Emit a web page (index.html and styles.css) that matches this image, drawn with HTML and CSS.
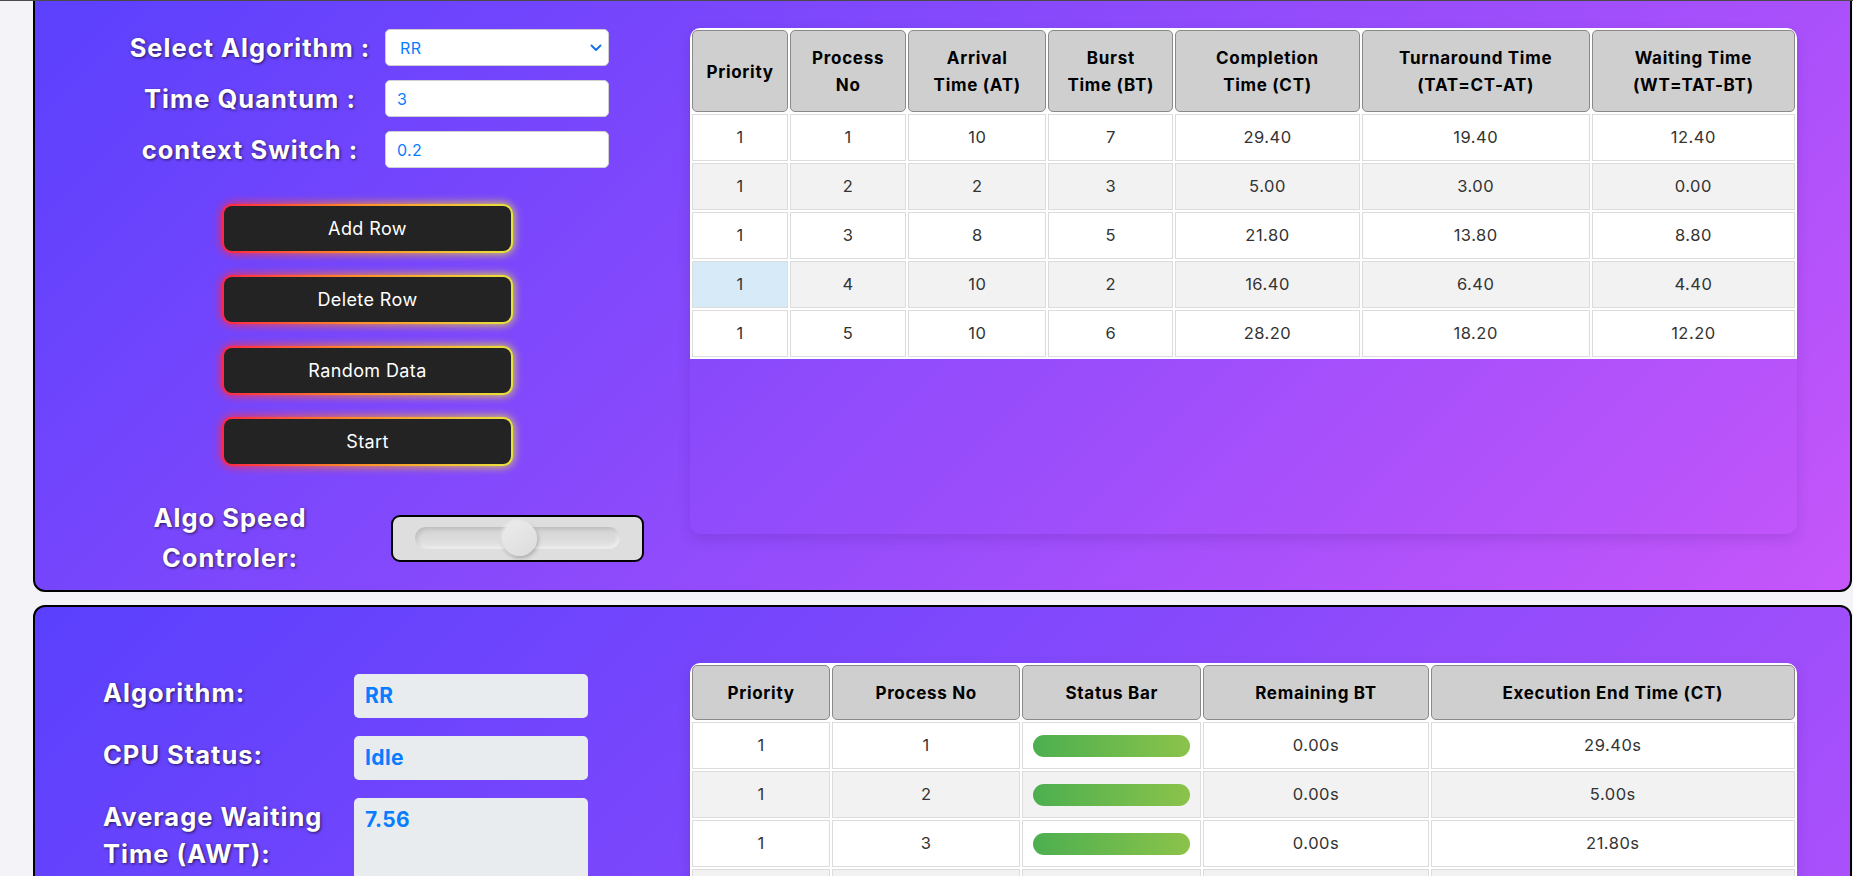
FILE: index.html
```html
<!DOCTYPE html>
<html lang="en">
<head>
<meta charset="utf-8">
<title>CPU Scheduling Visualizer</title>
<link rel="stylesheet" href="styles.css">
</head>
<body>
<div class="page">
  <section class="panel panel-top">
    <div class="controls">
      <div class="form-grid">
        <label class="field-label">Select Algorithm :</label>
        <div class="select-wrap">
          <select class="field-input field-select"><option>RR</option></select>
          <svg class="chevron" width="12" height="8" viewBox="0 0 12 8"><polyline points="1.5,1.5 6,6 10.5,1.5" fill="none" stroke="#1a73e8" stroke-width="2" stroke-linecap="round" stroke-linejoin="round"/></svg>
        </div>
        <label class="field-label">Time Quantum :</label>
        <input class="field-input" type="text" value="3">
        <label class="field-label">context Switch :</label>
        <input class="field-input" type="text" value="0.2">
      </div>
      <div class="buttons">
        <button class="glow-btn">Add Row</button>
        <button class="glow-btn">Delete Row</button>
        <button class="glow-btn">Random Data</button>
        <button class="glow-btn">Start</button>
      </div>
      <div class="speed-row">
        <div class="speed-label">Algo Speed<br>Controler:</div>
        <div class="slider-box"><input class="slider" type="range" min="0" max="100" value="51"></div>
      </div>
    </div>
    <div class="table-card table-card-top">
      <table class="data-table table-main">
        <thead>
          <tr>
            <th>Priority</th>
            <th>Process<br>No</th>
            <th>Arrival<br>Time (AT)</th>
            <th>Burst<br>Time (BT)</th>
            <th>Completion<br>Time (CT)</th>
            <th>Turnaround Time<br>(TAT=CT-AT)</th>
            <th>Waiting Time<br>(WT=TAT-BT)</th>
          </tr>
        </thead>
        <tbody>
          <tr><td>1</td><td>1</td><td>10</td><td>7</td><td>29.40</td><td>19.40</td><td>12.40</td></tr>
          <tr><td>1</td><td>2</td><td>2</td><td>3</td><td>5.00</td><td>3.00</td><td>0.00</td></tr>
          <tr><td>1</td><td>3</td><td>8</td><td>5</td><td>21.80</td><td>13.80</td><td>8.80</td></tr>
          <tr><td class="cell-hover">1</td><td>4</td><td>10</td><td>2</td><td>16.40</td><td>6.40</td><td>4.40</td></tr>
          <tr><td>1</td><td>5</td><td>10</td><td>6</td><td>28.20</td><td>18.20</td><td>12.20</td></tr>
        </tbody>
      </table>
    </div>
  </section>

  <section class="panel panel-bottom">
    <div class="info">
      <div class="info-grid">
        <div class="info-label">Algorithm:</div>
        <div class="info-box">RR</div>
        <div class="info-label">CPU Status:</div>
        <div class="info-box">Idle</div>
        <div class="info-label">Average Waiting Time (AWT):</div>
        <div class="info-box info-box-tall">7.56</div>
      </div>
    </div>
    <div class="table-card">
      <table class="data-table table-status">
        <thead>
          <tr>
            <th>Priority</th>
            <th>Process No</th>
            <th>Status Bar</th>
            <th>Remaining BT</th>
            <th>Execution End Time (CT)</th>
          </tr>
        </thead>
        <tbody>
          <tr><td>1</td><td>1</td><td><div class="status-bar"></div></td><td>0.00s</td><td>29.40s</td></tr>
          <tr><td>1</td><td>2</td><td><div class="status-bar"></div></td><td>0.00s</td><td>5.00s</td></tr>
          <tr><td>1</td><td>3</td><td><div class="status-bar"></div></td><td>0.00s</td><td>21.80s</td></tr>
          <tr><td>1</td><td>4</td><td><div class="status-bar"></div></td><td>0.00s</td><td>16.40s</td></tr>
          <tr><td>1</td><td>5</td><td><div class="status-bar"></div></td><td>0.00s</td><td>28.20s</td></tr>
        </tbody>
      </table>
    </div>
  </section>
</div>
</body>
</html>
```

FILE: styles.css
```css
* {
  box-sizing: border-box;
}

html {
  overflow: hidden;
  background: #f4f4f8;
}

body {
  margin: 0;
  font-family: Inter, "Liberation Sans", sans-serif;
  background: #f4f4f8;
  color: #333;
}

body::before {
  content: "";
  position: fixed;
  top: 0;
  left: 0;
  right: 0;
  height: 1px;
  background: #4a4a4a;
  z-index: 5;
}

.page {
  margin-top: -20px;
  padding: 0 1px 0 33px;
}

.panel {
  display: flex;
  align-items: flex-start;
  border: 2px solid #000;
  border-radius: 12px;
  background: linear-gradient(135deg, #5a40fd 0%, #c556fa 100%);
}

.panel-top {
  padding: 46px 53px 12px 0;
}

.panel-bottom {
  margin-top: 13px;
  padding: 56px 53px 0 0;
  height: 1000px;
}

/* ---------- controls ---------- */
.controls {
  flex: 0 0 655px;
  display: flex;
  flex-direction: column;
}

.form-grid {
  margin: 1px 0 0 90px;
  display: grid;
  grid-template-columns: 250px 224px;
  grid-auto-rows: 37px;
  column-gap: 10px;
  row-gap: 14px;
  align-items: center;
}

.field-label {
  text-align: center;
  color: #fff;
  font-size: 25.5px;
  font-weight: 700;
  letter-spacing: 1px;
  white-space: nowrap;
  text-shadow: 1px 1px 3px rgba(0, 0, 0, 0.65);
}

.field-input {
  width: 224px;
  height: 37px;
  border: 1px solid #cfcfcf;
  border-radius: 5px;
  background: #fff;
  padding: 0 11px;
  font-family: inherit;
  font-size: 16px;
  letter-spacing: 0.4px;
  color: #0a7cff;
  outline: none;
}

.select-wrap {
  position: relative;
  width: 224px;
  height: 37px;
}

.field-select {
  -webkit-appearance: none;
  appearance: none;
  padding-left: 14px;
}

.chevron {
  position: absolute;
  right: 7px;
  top: 15px;
}

.buttons {
  margin: 36px 0 0 187px;
  display: flex;
  flex-direction: column;
  gap: 22px;
  isolation: isolate;
}

.glow-btn {
  position: relative;
  width: 291px;
  height: 49px;
  border: 2px solid transparent;
  border-radius: 10px;
  background: linear-gradient(#232323, #232323) padding-box,
              linear-gradient(90deg, #ff2548 0%, #ff8a2a 45%, #e8e43c 100%) border-box;
  color: #fff;
  font-family: inherit;
  font-size: 18px;
  letter-spacing: 0.4px;
  font-weight: 400;
  cursor: pointer;
}

.glow-btn::before {
  content: "";
  position: absolute;
  inset: -3px;
  border-radius: 12px;
  background: linear-gradient(90deg, #ff2548 0%, #ff8a2a 45%, #e8e43c 100%);
  filter: blur(4px);
  opacity: 0.9;
  z-index: -1;
}

.speed-row {
  margin-top: 32px;
  display: flex;
  align-items: center;
}

.speed-label {
  width: 200px;
  margin-left: 95px;
  text-align: center;
  color: #fff;
  font-size: 25.5px;
  font-weight: 700;
  letter-spacing: 1px;
  line-height: 40px;
  text-shadow: 1px 1px 3px rgba(0, 0, 0, 0.65);
}

.slider-box {
  margin-left: 61px;
  width: 253px;
  height: 47px;
  border: 2px solid #000;
  border-radius: 9px;
  background: #dedede;
  padding: 0 22px;
  display: flex;
  align-items: center;
}

.slider {
  -webkit-appearance: none;
  appearance: none;
  width: 205px;
  height: 22px;
  margin: 0;
  border-radius: 11px;
  background: linear-gradient(180deg, #d2d2d2, #e4e4e4);
  box-shadow: inset 2px 2px 4px rgba(0, 0, 0, 0.12), inset -2px -2px 4px rgba(255, 255, 255, 0.5);
  outline: none;
}

.slider::-webkit-slider-thumb {
  -webkit-appearance: none;
  appearance: none;
  width: 35px;
  height: 35px;
  border-radius: 50%;
  background: linear-gradient(145deg, #ececec, #dcdcdc);
  box-shadow: 1px 2px 4px rgba(0, 0, 0, 0.25), -1px -1px 3px rgba(255, 255, 255, 0.7);
  cursor: pointer;
}

/* ---------- tables ---------- */
.table-card {
  width: 1107px;
  border-radius: 10px;
  overflow: hidden;
  box-shadow: 0 5px 14px rgba(40, 0, 90, 0.14);
}

.table-card-top {
  height: 506px;
}

.data-table {
  width: 1107px;
  table-layout: fixed;
  border-collapse: separate;
  border-spacing: 2px;
  background: #fff;
}

.data-table th {
  background: #cfcfcf;
  border: 1px solid #8a8a8a;
  border-radius: 5px;
  padding: 14px 2px 12px;
  font-size: 17px;
  font-weight: 700;
  letter-spacing: 0.7px;
  line-height: 27px;
  color: #000;
  text-align: center;
}

.data-table td {
  border: 1px solid #dcdcdc;
  padding: 10px;
  font-size: 16.5px;
  letter-spacing: 0.5px;
  line-height: 25px;
  color: #333;
  text-align: center;
  background: #fff;
}

.data-table tbody tr:nth-child(even) td {
  background: #f2f2f2;
}

.data-table tbody tr td.cell-hover {
  background: #d6eaf8;
}

.table-main th:nth-child(1) { width: 96px; }
.table-main th:nth-child(2) { width: 116px; }
.table-main th:nth-child(3) { width: 138px; }
.table-main th:nth-child(4) { width: 125px; }
.table-main th:nth-child(5) { width: 184px; }
.table-main th:nth-child(6) { width: 228px; }
.table-main th:nth-child(7) { width: 203px; }

.table-status th:nth-child(1) { width: 138px; }
.table-status th:nth-child(2) { width: 188px; }
.table-status th:nth-child(3) { width: 179px; }
.table-status th:nth-child(4) { width: 225px; }
.table-status th:nth-child(5) { width: 364px; }

.status-bar {
  height: 22px;
  border-radius: 11px;
  background: linear-gradient(90deg, #4caf50, #8bc34a);
}

/* ---------- info ---------- */
.info {
  flex: 0 0 655px;
  padding: 11px 0 0 68px;
}

.info-grid {
  display: grid;
  grid-template-columns: 241px 234px;
  column-gap: 10px;
  row-gap: 18px;
  align-items: start;
}

.info-label {
  color: #fff;
  font-size: 25.5px;
  font-weight: 700;
  letter-spacing: 1px;
  line-height: 37px;
  text-shadow: 1px 1px 3px rgba(0, 0, 0, 0.65);
}

.info-box {
  min-height: 44px;
  background: #e9ecef;
  border-radius: 5px;
  padding: 7px 11px;
  font-size: 21px;
  font-weight: 700;
  letter-spacing: 0.4px;
  line-height: 30px;
  color: #0a7cff;
}

.info-box-tall {
  height: 110px;
}
```
